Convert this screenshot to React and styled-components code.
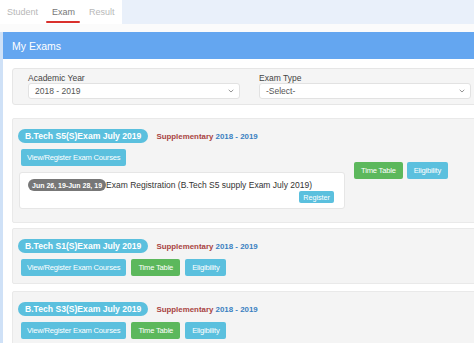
import styled, { createGlobalStyle } from "styled-components";

const GlobalStyle = createGlobalStyle`
  html, body {
    margin: 0;
    padding: 0;
    background: #ffffff;
    overflow: hidden;
  }
  body {
    font-family: "Liberation Sans", Arial, sans-serif;
    color: #333;
  }
`;

const Page = styled.div`
  width: 474px;
  height: 343px;
  overflow: hidden;
  background: #fbfbfb;
`;

const TabBar = styled.div`
  display: flex;
  height: 24px;
  background: #ffffff;
`;

const Tab = styled.div`
  position: relative;
  display: flex;
  align-items: center;
  padding: 0 7px;
  font-size: 9px;
  color: ${(p) => (p.active ? "#777" : "#b8b8b8")};

  ${(p) =>
    p.active &&
    `
    &::after {
      content: "";
      position: absolute;
      left: 1px;
      right: 2px;
      bottom: 1px;
      height: 2px;
      background: #d9302c;
      border-radius: 1px;
    }
  `}
`;

const TabFiller = styled.div`
  flex: 1;
  background: #e9f0fa;
`;

const Panel = styled.div`
  margin-top: 8px;
  width: 500px;
  border-left: 3px solid #cfe1f7;
  background: #ffffff;
`;

const PanelHeader = styled.div`
  height: 27px;
  display: flex;
  align-items: center;
  padding-left: 9px;
  background: #64a6f0;
  color: #fff;
  font-size: 10.5px;
`;

const PanelBody = styled.div`
  padding: 9px 0 0 9px;
  display: flex;
  flex-direction: column;
`;

const Well = styled.div`
  box-sizing: border-box;
  height: 37px;
  padding: 4px 0 0 15px;
  background: #f5f5f5;
  border: 1px solid #e6e6e6;
  border-radius: 3px;
  display: grid;
  grid-template-columns: 212px 212px;
  column-gap: 19px;
`;

const Field = styled.div`
  display: flex;
  flex-direction: column;
`;

const Label = styled.div`
  font-size: 8.5px;
  color: #444;
  height: 10px;
  line-height: 10px;
`;

const Select = styled.div`
  box-sizing: border-box;
  height: 16px;
  display: flex;
  align-items: center;
  justify-content: space-between;
  padding: 0 5px 0 6px;
  background: #fff;
  border: 1px solid #e2e2e2;
  border-radius: 3px;
  font-size: 8.5px;
  color: #555;
`;

const Chevron = () => (
  <svg width="6" height="4" viewBox="0 0 6 4">
    <path d="M0.7 0.8 L3 3 L5.3 0.8" fill="none" stroke="#888" strokeWidth="0.9" />
  </svg>
);

const Card = styled.div`
  box-sizing: border-box;
  margin-top: ${(p) => p.gap}px;
  padding: 10px 5px ${(p) => p.pb}px 5px;
  background: #f4f4f4;
  border: 1px solid #e9e9e9;
  border-radius: 2px;
`;

const TitleRow = styled.div`
  display: flex;
  align-items: center;
  gap: 8px;
  height: 14px;
`;

const ExamBadge = styled.span`
  height: 14px;
  display: inline-flex;
  align-items: center;
  padding: 0 7px;
  background: #5bc0de;
  color: #fff;
  font-weight: bold;
  font-size: 8.6px;
  border-radius: 7px;
`;

const Kind = styled.span`
  font-size: 7.9px;
  font-weight: bold;
  color: #a94442;
`;

const Year = styled.span`
  color: #3a7fc1;
`;

const ButtonRow = styled.div`
  display: flex;
  gap: 5px;
  margin: 6px 0 0 3px;
`;

const Button = styled.span`
  box-sizing: border-box;
  height: 17px;
  display: inline-flex;
  align-items: center;
  padding: 0 ${(p) => p.px || 6}px;
  background: ${(p) => (p.green ? "#5cb85c" : "#5bc0de")};
  color: #fff;
  font-size: 7.6px;
  border-radius: 2px;
  letter-spacing: -0.2px;
`;

const SplitRow = styled.div`
  display: flex;
  align-items: flex-start;
`;

const LeftCol = styled.div`
  width: 327px;
  display: flex;
  flex-direction: column;
`;

const SideActions = styled.div`
  display: flex;
  gap: 4px;
  margin: 19px 0 0 9px;
`;

const NoticeBox = styled.div`
  box-sizing: border-box;
  margin: 6px 0 0 1px;
  height: 37px;
  padding: 6px 10px 0 8px;
  background: #fff;
  border: 1px solid #e6e6e6;
  border-radius: 3px;
  display: flex;
  flex-direction: column;
`;

const NoticeLine = styled.div`
  display: flex;
  align-items: center;
  font-size: 8.5px;
  color: #333;
  white-space: nowrap;
`;

const DatePill = styled.span`
  height: 12px;
  display: inline-flex;
  align-items: center;
  padding: 0 4px;
  background: #777;
  color: #fff;
  font-weight: bold;
  font-size: 7px;
  border-radius: 6px;
`;

const SmallButton = styled.span`
  align-self: flex-end;
  height: 12px;
  display: inline-flex;
  align-items: center;
  padding: 0 4px;
  background: #5bc0de;
  color: #fff;
  font-size: 7.2px;
  border-radius: 2px;
`;

const Title = ({ name }) => (
  <TitleRow>
    <ExamBadge>{name}</ExamBadge>
    <Kind>
      Supplementary <Year>2018 - 2019</Year>
    </Kind>
  </TitleRow>
);

export default function App() {
  return (
    <Page>
      <GlobalStyle />
      <TabBar>
        <Tab>Student</Tab>
        <Tab active>Exam</Tab>
        <Tab>Result</Tab>
        <TabFiller />
      </TabBar>
      <Panel>
        <PanelHeader>My Exams</PanelHeader>
        <PanelBody>
          <Well>
            <Field>
              <Label>Academic Year</Label>
              <Select>
                2018 - 2019
                <Chevron />
              </Select>
            </Field>
            <Field>
              <Label>Exam Type</Label>
              <Select>
                -Select-
                <Chevron />
              </Select>
            </Field>
          </Well>

          <Card gap={13} pb={13}>
            <Title name="B.Tech S5(S)Exam July 2019" />
            <SplitRow>
              <LeftCol>
                <ButtonRow>
                  <Button>View/Register Exam Courses</Button>
                </ButtonRow>
                <NoticeBox>
                  <NoticeLine>
                    <DatePill>Jun 26, 19-Jun 28, 19</DatePill>
                    Exam Registration (B.Tech S5 supply Exam July 2019)
                  </NoticeLine>
                  <SmallButton>Register</SmallButton>
                </NoticeBox>
              </LeftCol>
              <SideActions>
                <Button green px={7}>Time Table</Button>
                <Button px={7}>Eligibility</Button>
              </SideActions>
            </SplitRow>
          </Card>

          <Card gap={5} pb={7}>
            <Title name="B.Tech S1(S)Exam July 2019" />
            <ButtonRow>
              <Button>View/Register Exam Courses</Button>
              <Button green px={7}>Time Table</Button>
              <Button px={7}>Eligibility</Button>
            </ButtonRow>
          </Card>

          <Card gap={7} pb={7}>
            <Title name="B.Tech S3(S)Exam July 2019" />
            <ButtonRow>
              <Button>View/Register Exam Courses</Button>
              <Button green px={7}>Time Table</Button>
              <Button px={7}>Eligibility</Button>
            </ButtonRow>
          </Card>
        </PanelBody>
      </Panel>
    </Page>
  );
}
